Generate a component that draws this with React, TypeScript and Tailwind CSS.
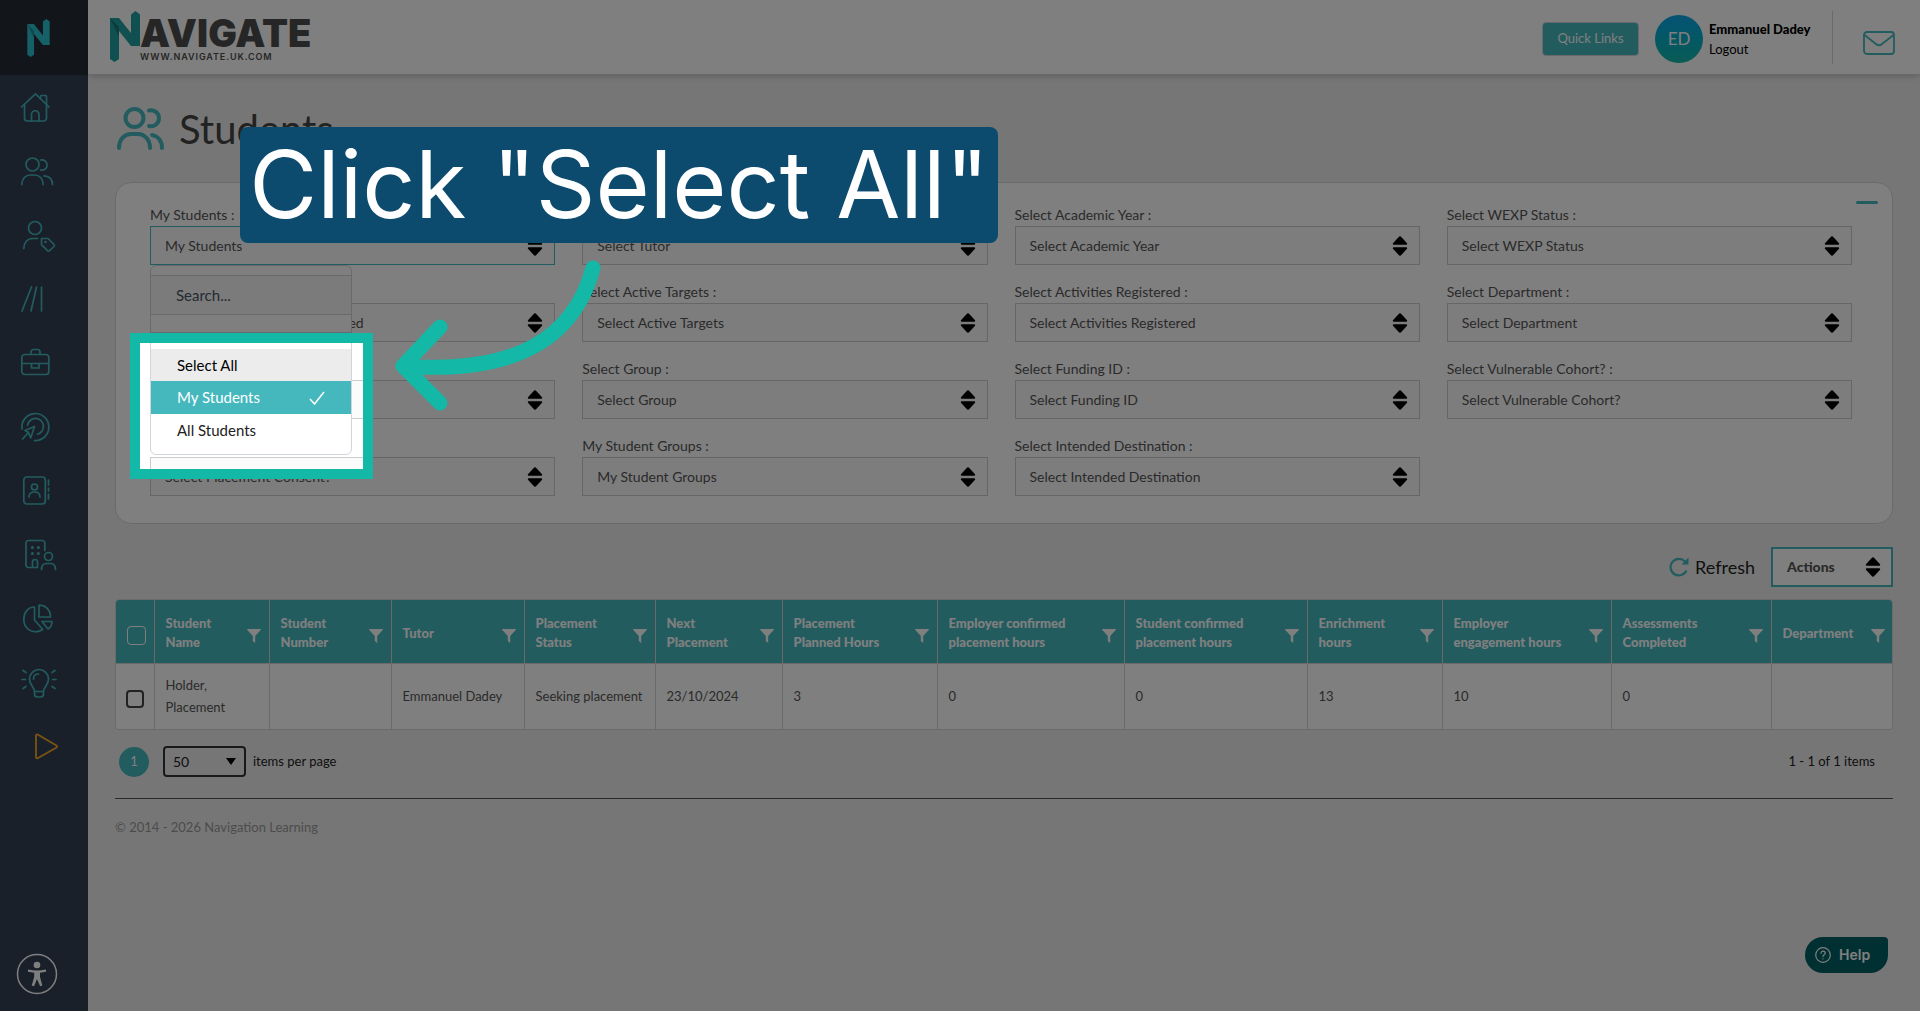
import { ReactNode } from 'react';

interface FilterField {
  id: string;
  label: string;
  value: string;
}

interface Column {
  label: string;
  value: string;
  width: string;
}

const filters: FilterField[] = [
  { id: 'my-students', label: 'My Students', value: 'My Students' },
  { id: 'tutor', label: 'Select Tutor', value: 'Select Tutor' },
  { id: 'academic-year', label: 'Select Academic Year', value: 'Select Academic Year' },
  { id: 'wexp-status', label: 'Select WEXP Status', value: 'Select WEXP Status' },
  { id: 'placement', label: 'Placement Activity', value: 'Select Placement Activity Added' },
  { id: 'active-targets', label: 'Select Active Targets', value: 'Select Active Targets' },
  { id: 'activities', label: 'Select Activities Registered', value: 'Select Activities Registered' },
  { id: 'department', label: 'Select Department', value: 'Select Department' },
  { id: 'course', label: 'Select Course', value: 'Select Course' },
  { id: 'group', label: 'Select Group', value: 'Select Group' },
  { id: 'funding', label: 'Select Funding ID', value: 'Select Funding ID' },
  { id: 'cohort', label: 'Select Vulnerable Cohort?', value: 'Select Vulnerable Cohort?' },
  { id: 'consent', label: 'Placement Consent?', value: 'Select Placement Consent?' },
  { id: 'student-groups', label: 'My Student Groups', value: 'My Student Groups' },
  { id: 'destination', label: 'Select Intended Destination', value: 'Select Intended Destination' },
];

const columns: Column[] = [
  { label: 'Student Name', value: 'Holder, Placement', width: 'w-[115px]' },
  { label: 'Student Number', value: '', width: 'w-[122px]' },
  { label: 'Tutor', value: 'Emmanuel Dadey', width: 'w-[133px]' },
  { label: 'Placement Status', value: 'Seeking placement', width: 'w-[131px]' },
  { label: 'Next Placement', value: '23/10/2024', width: 'w-[127px]' },
  { label: 'Placement Planned Hours', value: '3', width: 'w-[155px]' },
  { label: 'Employer confirmed placement hours', value: '0', width: 'w-[187px]' },
  { label: 'Student confirmed placement hours', value: '0', width: 'w-[183px]' },
  { label: 'Enrichment hours', value: '13', width: 'w-[135px]' },
  { label: 'Employer engagement hours', value: '10', width: 'w-[169px]' },
  { label: 'Assessments Completed', value: '0', width: 'w-[160px]' },
  { label: 'Department', value: '', width: 'w-[122px]' },
];

const navItems: { name: string; icon: ReactNode }[] = [
  {
    name: 'Home',
    icon: (
      <>
        <path d="M1.5 16 15.5 2.8 29 16" />
        <path d="M4.5 13.5V27a3 3 0 0 0 3 3h16a3 3 0 0 0 3-3V8M20.500 7V5.500a1 1 0 0 1 1-1h4a1 1 0 0 1 1 1V13.500" />
        <path d="M11.500 30v-6.500a3.500 3.500 0 0 1 7.500 0V30" />
      </>
    ),
  },
  {
    name: 'Students',
    icon: (
      <>
        <circle cx="12.500" cy="9.500" r="6.500" />
        <path d="M20.500 5a5.200 5.200 0 1 1 0 10M1.800 29.500c0-6 4-9.500 8.700-9.500h4c4.700 0 8.700 3.500 8.700 9.500M24 20.800c5 0 8.500 3.500 8.500 8.700" />
      </>
    ),
  },
  {
    name: 'Student tags',
    icon: (
      <>
        <circle cx="15" cy="9" r="6.500" />
        <path d="M3.800 29.500c0-6 3.700-10 9-10H17.500M21.500 19.500h6.500l6 6c.7.700.7 1.300 0 2l-4.500 4.200c-.7.600-1.300.6-2 0l-6-6z" />
        <circle cx="25.500" cy="23" r=".5" />
      </>
    ),
  },
  { name: 'Courses', icon: <path d="M11.500 4 2 28M16.500 4 11 28M21.500 4v24" /> },
  {
    name: 'Placements',
    icon: (
      <>
        <rect x="1.800" y="7.500" width="27" height="20" rx="3" />
        <path d="M11 7.500V5a2.500 2.500 0 0 1 2.500-2.500h4A2.500 2.500 0 0 1 20 5v2.500M1.800 16.500h27M11.500 16.500V21h7.500v-4.500" />
      </>
    ),
  },
  {
    name: 'Targets',
    icon: (
      <>
        <path d="M2 18A13.500 13.500 0 1 1 14.500 29.500" />
        <path d="M7.500 14.500A8 8 0 1 1 17.500 23.200" />
        <path d="m14.500 15.500-9.500 4 3.500 2-6 6.500M14.500 15.500l-3.800 11.500-2.200-5.500" />
      </>
    ),
  },
  {
    name: 'Contacts',
    icon: (
      <>
        <rect x="3.800" y="2" width="21.500" height="27" rx="3" />
        <circle cx="14.500" cy="12" r="3" />
        <path d="M9 22c0-3.500 2-5 5.500-5s5.500 1.500 5.500 5M28.500 5v5M28.500 13v3M28.500 19v5" />
      </>
    ),
  },
  {
    name: 'Employers',
    icon: (
      <>
        <path d="M24.800 11.500V4a2.500 2.500 0 0 0-2.500-2.500H8.500A2.500 2.500 0 0 0 6 4v22a2.500 2.500 0 0 0 2.500 2.500H17.500V23a2.500 2.500 0 0 0-5 0v5.500" />
        <path d="M12.300 8.500h.1M18.300 8.500h.1M12.300 14.500h.1M18.300 14.500h.1" strokeWidth="3" />
        <circle cx="28.500" cy="17.500" r="4" />
        <path d="M21.500 30.500c0-4 2-6 5-6h4c3 0 5 2 5 6" />
      </>
    ),
  },
  {
    name: 'Reports',
    icon: (
      <>
        <path d="M14.500 4C8 4 3.800 9.500 3.800 16.500s5.200 12.300 12 12.300c2.500 0 5-.8 7-2.300L14.500 17z" />
        <path d="M19 2.200c6.500 0 11.500 4.500 11.500 11.800H19zM22 18.500h10c0 3-1.500 6-4 7.500z" />
      </>
    ),
  },
  {
    name: 'Ideas',
    icon: (
      <>
        <path d="M14.500 24.500c0-4.500-5-6-5-12.500a9.500 9.500 0 0 1 19 0c0 6.500-5 8-5 12.500zM14.500 24.500V27a3 3 0 0 0 3 3h3a3 3 0 0 0 3-3v-2.500" />
        <path d="M13.500 12c0-3 2-5 5-5M2 12.500h3.500M32.500 12.500H36M3 3.500l3 2M35 3.500l-3 2M3 21.500l3-2M35 21.500l-3-2" />
      </>
    ),
  },
];

const NavigateMark = ({ className }: { className: string }) => (
  <svg viewBox="0 0 30 51" className={className} aria-hidden="true">
    <path d="M0 7h9v41l-4.500 3L0 48z" fill="currentColor" />
    <path d="M21 3.500 25.500 0 30 3.500V35h-9z" fill="currentColor" />
    <path d="M0 7h9l12 15 9 13h-9L9 20z" fill="currentColor" />
    <path d="M0 7l9 9v10z" fill="#000" opacity=".25" />
  </svg>
);

const SortArrows = () => (
  <svg viewBox="0 0 16 20" className="pointer-events-none absolute top-1/2 right-3 h-5 w-4 -translate-y-1/2" aria-hidden="true">
    <path d="M6.500 1.200a2 2 0 0 1 3 0L14.800 7c.8.900.4 1.800-.6 1.800H1.800C.8 8.800.4 7.900 1.200 7zM6.500 18.800a2 2 0 0 0 3 0l5.300-5.800c.8-.9.400-1.800-.6-1.800H1.800c-1 0-1.400.9-.6 1.800z" />
  </svg>
);

const Sidebar = () => (
  <nav className="flex w-22 shrink-0 flex-col bg-[#344055]">
    <a href="#home" aria-label="Navigate" className="flex h-[75px] items-center bg-[#252c36] pl-[27px]">
      <NavigateMark className="h-[38px] w-[23px] text-[#2cc0cf]" />
    </a>
    {navItems.map((item) => (
      <a key={item.name} href="#nav" aria-label={item.name} className="flex h-16 items-center pl-5 text-[#44b8be]">
        <svg viewBox="0 0 40 32" className="h-8 w-10 overflow-visible" fill="none" stroke="currentColor" strokeWidth="1.700" strokeLinecap="round" strokeLinejoin="round">
          {item.icon}
        </svg>
      </a>
    ))}
    <a href="#videos" aria-label="Videos" className="flex h-16 items-center pl-5 text-[#f7a823]">
      <svg viewBox="0 0 40 32" className="h-8 w-10" fill="none" stroke="currentColor" strokeWidth="1.800" strokeLinejoin="round">
        <path d="M16 4.500c0-1 .8-1.500 1.600-1L36.500 14.500c.8.500.8 1.500 0 2L17.600 27.200c-.8.400-1.600 0-1.600-1z" />
      </svg>
    </a>
    <button aria-label="Accessibility" className="mt-auto mb-4 ml-4 h-[42px] w-[42px] text-white">
      <svg viewBox="0 0 42 42" fill="currentColor">
        <circle cx="21" cy="21" r="19.500" fill="none" stroke="currentColor" strokeWidth="1.500" />
        <circle cx="21" cy="12" r="3.300" />
        <path d="M12 16.500c6 1.300 12 1.300 18 0v2.200l-6 1V24l2.300 8.500-2.200.7L21 26l-3 7.200-2.300-.7L18.200 24v-4.300l-6.200-1z" />
      </svg>
    </button>
  </nav>
);

const Header = () => (
  <header className="flex h-[75px] items-center border-b border-gray-300 bg-white pr-[25px] pl-[22px] shadow-md">
    <div className="flex">
      <NavigateMark className="h-[51px] w-[30px] text-[#20a0a0]" />
      <div className="pt-2">
        <div className="font-[Inter] text-[38px] leading-7 font-black text-[#4d4d4d]">AVIGATE</div>
        <div className="mt-1 font-[Inter] text-[9px] leading-3 font-semibold tracking-widest text-[#4d4d4d]">WWW.NAVIGATE.UK.COM</div>
      </div>
    </div>
    <button className="mt-1 ml-auto h-[34px] w-[97px] rounded border border-gray-300 bg-[#44b8be] text-[13px] text-white">Quick Links</button>
    <div className="mt-1 ml-4 flex h-12 w-12 items-center justify-center rounded-full bg-linear-to-b from-[#0ea5e9] to-[#14b8a6] text-[17px] text-white">ED</div>
    <div className="mt-1 ml-1.5 w-[123px] text-[13px] leading-5 text-black">
      <div className="font-black">Emmanuel Dadey</div>
      <a href="#logout">Logout</a>
    </div>
    <div className="h-[53px] border-l border-gray-300" />
    <a href="#messages" aria-label="Messages" className="mt-3 ml-[30px] text-[#44b8be]">
      <svg viewBox="0 0 32 24" className="h-6 w-8" fill="none" stroke="currentColor" strokeWidth="1.800" strokeLinejoin="round">
        <rect x="1" y="1" width="30" height="22" rx="3" />
        <path d="m1.500 4 11.500 9c2 1.700 4 1.700 6 0l11.500-9" />
      </svg>
    </a>
  </header>
);

const StudentsMenu = () => (
  <div className="absolute top-full left-0 z-10 w-[202px] rounded-md border border-gray-300 bg-white pt-[9px] pb-2">
    <input type="text" aria-label="Search students" placeholder="Search..." className="block h-10 w-full border-y border-gray-300 bg-[#f7f7f7] px-[25px] text-[15px] placeholder:text-gray-600" />
    <div className="h-[18px] border-b border-gray-300" />
    <ul className="pt-4 text-[15px]">
      <li><button className="h-8 w-full bg-[#ececec] px-[26px] text-left text-black">Select All</button></li>
      <li>
        <button className="flex h-[33px] w-full items-center justify-between bg-[#45b8be] px-[26px] text-left text-white">
          My Students
          <svg viewBox="0 0 16 14" className="h-3.5 w-4" fill="none" stroke="currentColor" strokeWidth="1.500">
            <path d="m1 8 4.500 5L15 1" />
          </svg>
        </button>
      </li>
      <li><button className="h-8 w-full px-[26px] text-left text-[#222222]">All Students</button></li>
    </ul>
  </div>
);

const FilterSelect = ({ field }: { field: FilterField }) => {
  const active = field.id === 'my-students';
  return (
    <div className="relative">
      <label htmlFor={field.id} className="block h-[22px] text-sm leading-[22px] text-[#555555]">{field.label} :</label>
      <div className="relative">
        <select
          id={field.id}
          className={`block h-[39px] w-full appearance-none border bg-[#fbfbfb] px-3.5 text-sm text-[#555555] ${active ? 'border-[#44b8be]' : 'border-[#cccccc]'}`}
        >
          <option>{field.value}</option>
        </select>
        <SortArrows />
      </div>
      {active && <StudentsMenu />}
    </div>
  );
};

const FilterPanel = () => (
  <section className="relative rounded-2xl border border-[#d5d5d5] bg-white pt-[21px] pr-10 pb-[27px] pl-[34px]">
    <button aria-label="Collapse filters" className="absolute top-[18px] right-3.5 h-[3px] w-[22px] rounded-full bg-[#44b8be]" />
    <div className="grid grid-cols-4 gap-x-[27px] gap-y-4">
      {filters.map((field) => <FilterSelect key={field.id} field={field} />)}
    </div>
  </section>
);

const StudentsTable = () => (
  <div className="overflow-hidden rounded border border-[#d5d5d5] bg-white">
    <table className="w-full table-fixed text-[13px]">
      <thead className="bg-[#44b8be] text-white">
        <tr className="h-[63px]">
          <th className="w-[38px] border-r border-[#d5d5d5] pt-2 pl-1">
            <input type="checkbox" aria-label="Select all rows" className="h-[19px] w-[19px] appearance-none rounded border border-white align-middle" />
          </th>
          {columns.map((column) => (
            <th key={column.label} className={`border-r border-[#d5d5d5] pt-1 pr-2 pl-[11px] text-left font-black last:border-r-0 ${column.width}`}>
              <div className="flex items-center justify-between gap-4">
                <span className="leading-[19px]">{column.label}</span>
                <button aria-label={`Filter ${column.label}`} className="mt-1.5 shrink-0">
                  <svg viewBox="0 0 14 14" className="h-3.5 w-3.5" fill="currentColor">
                    <path d="M.5 0h13c.6 0 .5.600.2 1L8.200 7v7L5.800 12V7L.3 1C0 .6 0 0 .5 0z" />
                  </svg>
                </button>
              </div>
            </th>
          ))}
        </tr>
      </thead>
      <tbody className="text-[#555555]">
        <tr className="h-[66px] border-t border-[#d5d5d5]">
          <td className="border-r border-[#d5d5d5] pt-1 text-center">
            <input type="checkbox" aria-label="Select Holder, Placement" className="h-[18px] w-[18px] appearance-none rounded border-2 border-[#444444] align-middle" />
          </td>
          {columns.map((column) => (
            <td key={column.label} className="border-r border-[#d5d5d5] pl-[11px] leading-[22px] last:border-r-0">{column.value}</td>
          ))}
        </tr>
      </tbody>
    </table>
  </div>
);

// Dims the page around the menu and points at the option to press
const Walkthrough = () => (
  <div className="pointer-events-none absolute inset-0 z-20 overflow-hidden">
    <div className="absolute top-[333px] left-[130px] h-[146px] w-[243px] border-10 border-[#14b8a6] shadow-[0_0_0_2400px_rgba(0,0,0,0.5)]" />
    <div className="absolute top-[127px] left-60 flex h-[116px] w-[758px] items-center justify-center rounded-lg bg-[#0c4a6e] font-[Inter] text-[93px] whitespace-nowrap text-white">
      Click "Select All"
    </div>
    <svg viewBox="0 0 220 160" className="absolute top-[255px] left-[390px] h-40 w-[220px]" fill="none" stroke="#14b8a6" strokeWidth="15" strokeLinecap="round" strokeLinejoin="round">
      <path d="M203 13C185 80 130 120 13 111M50 72 13 111 50 148" />
    </svg>
  </div>
);

const App = () => {
  return (
    <div className="relative flex min-h-screen overflow-hidden bg-[#ededed] font-[Lato,sans-serif]">
      <Sidebar />
      <div className="min-w-0 flex-1">
        <Header />
        <main className="px-[27px] pt-7">
          <h1 className="mb-7 flex h-[51px] items-center gap-3.5 text-[40px] text-[#444444]">
            <svg viewBox="0 0 50 46" className="h-[46px] w-[50px] text-[#44b8be]" fill="none" stroke="currentColor" strokeWidth="4" strokeLinecap="round">
              <circle cx="19.500" cy="12" r="9" />
              <path d="M34 4.500a8 8 0 1 1 0 15.500M4 42c0-9 6-14 12-14h7c6 0 12 5 12 14M37 29c6 1 10 6 10 13" />
            </svg>
            Students
          </h1>
          <FilterPanel />
          <div className="mt-[23px] mb-3 flex items-center justify-end gap-4">
            <button className="flex items-center gap-1.5 text-lg text-[#222222]">
              <svg viewBox="0 0 20 20" className="h-5 w-5 text-[#44b8be]" fill="none" stroke="currentColor" strokeWidth="2.200">
                <path d="M17.500 13.500A8.300 8.300 0 1 1 16 4.500" />
                <path d="M19.500.5v7h-7z" fill="currentColor" stroke="none" />
              </svg>
              Refresh
            </button>
            <div className="relative">
              <select aria-label="Actions" className="block h-10 w-[122px] appearance-none border-2 border-[#44b8be] bg-white px-3.5 text-sm font-black text-[#555555]">
                <option>Actions</option>
              </select>
              <SortArrows />
            </div>
          </div>
          <StudentsTable />
          <div className="mt-4 flex items-center pr-[18px] pl-1 text-[13px] text-[#222222]">
            <button className="h-[30px] w-[30px] rounded-full bg-[#44b8be] text-white">1</button>
            <div className="relative mr-[7px] ml-3.5">
              <select id="page-size" className="block h-[31px] w-[83px] appearance-none rounded border-2 border-[#333333] px-2 text-sm">
                <option>50</option>
              </select>
              <svg viewBox="0 0 10 7" className="pointer-events-none absolute top-3 right-2.5 h-[7px] w-2.5" aria-hidden="true">
                <path d="M0 0h10L5 7z" />
              </svg>
            </div>
            <label htmlFor="page-size">items per page</label>
            <span className="ml-auto">1 - 1 of 1 items</span>
          </div>
          <footer className="mt-[21px] border-t border-[#555555] pt-4 text-[13px] leading-6 text-[#999999]">© 2014 - 2026 Navigation Learning</footer>
        </main>
      </div>
      <button className="absolute right-8 bottom-[38px] flex h-9 w-[83px] items-center gap-2 rounded-tl-[18px] rounded-tr rounded-br-[18px] rounded-bl-[18px] bg-[#006064] pl-2.5 font-[Inter] text-sm font-semibold text-white">
        <svg viewBox="0 0 16 16" className="h-4 w-4" fill="none" stroke="currentColor" strokeWidth="1.200" strokeLinecap="round">
          <circle cx="8" cy="8" r="7.300" />
          <path d="M6 6.300c0-3 4.200-2.600 4.200-.1C10.200 7.800 8 7.700 8 9.400M8 11.700v.1" />
        </svg>
        Help
      </button>
      <Walkthrough />
    </div>
  );
};

export default App;
